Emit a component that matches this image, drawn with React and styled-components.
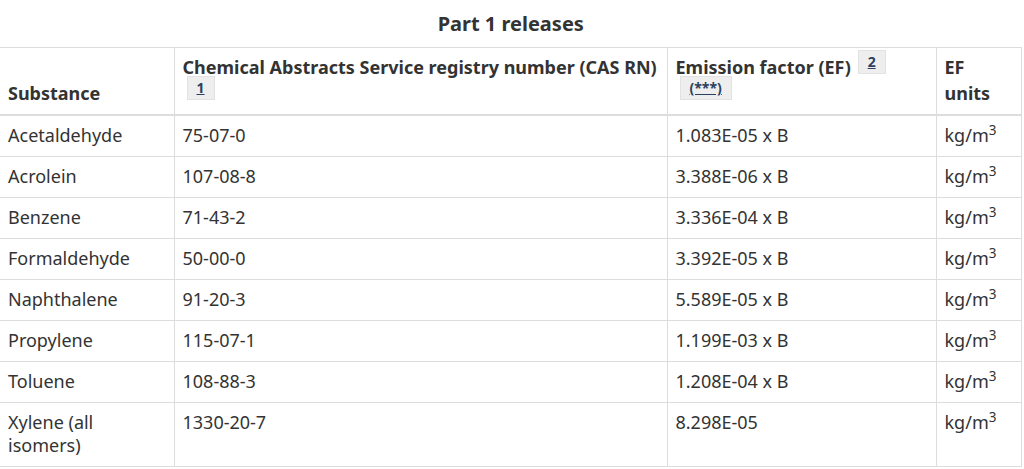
import React from "react";
import styled, { createGlobalStyle } from "styled-components";

const Global = createGlobalStyle`
  html, body { margin: 0; padding: 0; background: #fff; }
  body {
    font-family: "Noto Sans", "Open Sans", sans-serif;
    font-size: 18px;
    line-height: 23px;
    color: #333;
  }
`;

const Table = styled.table`
  width: 1021px;
  border-collapse: collapse;
  table-layout: fixed;
  border-top: 1px solid #ddd;
  border-right: 1px solid #ddd;
  border-bottom: 1px solid #ddd;
`;

const Caption = styled.caption`
  font-size: 20px;
  font-weight: 700;
  line-height: 28px;
  padding: 10px 0 9px;
  color: #333;
  text-align: center;
`;

const Th = styled.th`
  text-align: left;
  vertical-align: bottom;
  font-weight: 700;
  line-height: 26px;
  padding: 6px 8px 8px;
  border-left: ${(p) => (p.$first ? "none" : "1px solid #ddd")};
  border-bottom: 2px solid #ddd;
`;

const Td = styled.td`
  vertical-align: top;
  padding: 8px 8px 9px;
  border-left: ${(p) => (p.$first ? "none" : "1px solid #ddd")};
  border-top: 1px solid #ddd;
`;

const Sup = styled.sup`
  line-height: 0;
  font-size: 75%;
`;

const FnSup = styled.sup`
  font-size: 14px;
  line-height: 0;
  margin-left: ${(p) => p.$ml || "4px"};
  white-space: nowrap;
`;

const FnLink = styled.a`
  background: #eee;
  border: 1px solid #e2e2e2;
  padding: 1px 9px 2px;
  color: #284162;
  text-decoration: underline;
  font-weight: 700;
`;

const rows = [
  ["Acetaldehyde", "75-07-0", "1.083E-05 x B"],
  ["Acrolein", "107-08-8", "3.388E-06 x B"],
  ["Benzene", "71-43-2", "3.336E-04 x B"],
  ["Formaldehyde", "50-00-0", "3.392E-05 x B"],
  ["Naphthalene", "91-20-3", "5.589E-05 x B"],
  ["Propylene", "115-07-1", "1.199E-03 x B"],
  ["Toluene", "108-88-3", "1.208E-04 x B"],
  ["Xylene (all isomers)", "1330-20-7", "8.298E-05"],
];

export default function App() {
  return (
    <>
      <Global />
      <Table>
        <Caption>Part 1 releases</Caption>
        <colgroup>
          <col style={{ width: 174 }} />
          <col style={{ width: 493 }} />
          <col style={{ width: 269 }} />
          <col style={{ width: 85 }} />
        </colgroup>
        <thead>
          <tr>
            <Th $first>Substance</Th>
            <Th>
              Chemical Abstracts Service registry number (CAS RN){" "}
              <FnSup>
                <FnLink href="#fn1">1</FnLink>
              </FnSup>
            </Th>
            <Th>
              Emission factor (EF){" "}
              <FnSup $ml="2px">
                <FnLink href="#fn2">2</FnLink>
              </FnSup>{" "}
              <FnSup>
                <FnLink href="#fn3">(***)</FnLink>
              </FnSup>
            </Th>
            <Th>EF units</Th>
          </tr>
        </thead>
        <tbody>
          {rows.map(([s, cas, ef]) => (
            <tr key={s}>
              <Td $first>{s}</Td>
              <Td>{cas}</Td>
              <Td>{ef}</Td>
              <Td>
                kg/m<Sup>3</Sup>
              </Td>
            </tr>
          ))}
        </tbody>
      </Table>
    </>
  );
}
